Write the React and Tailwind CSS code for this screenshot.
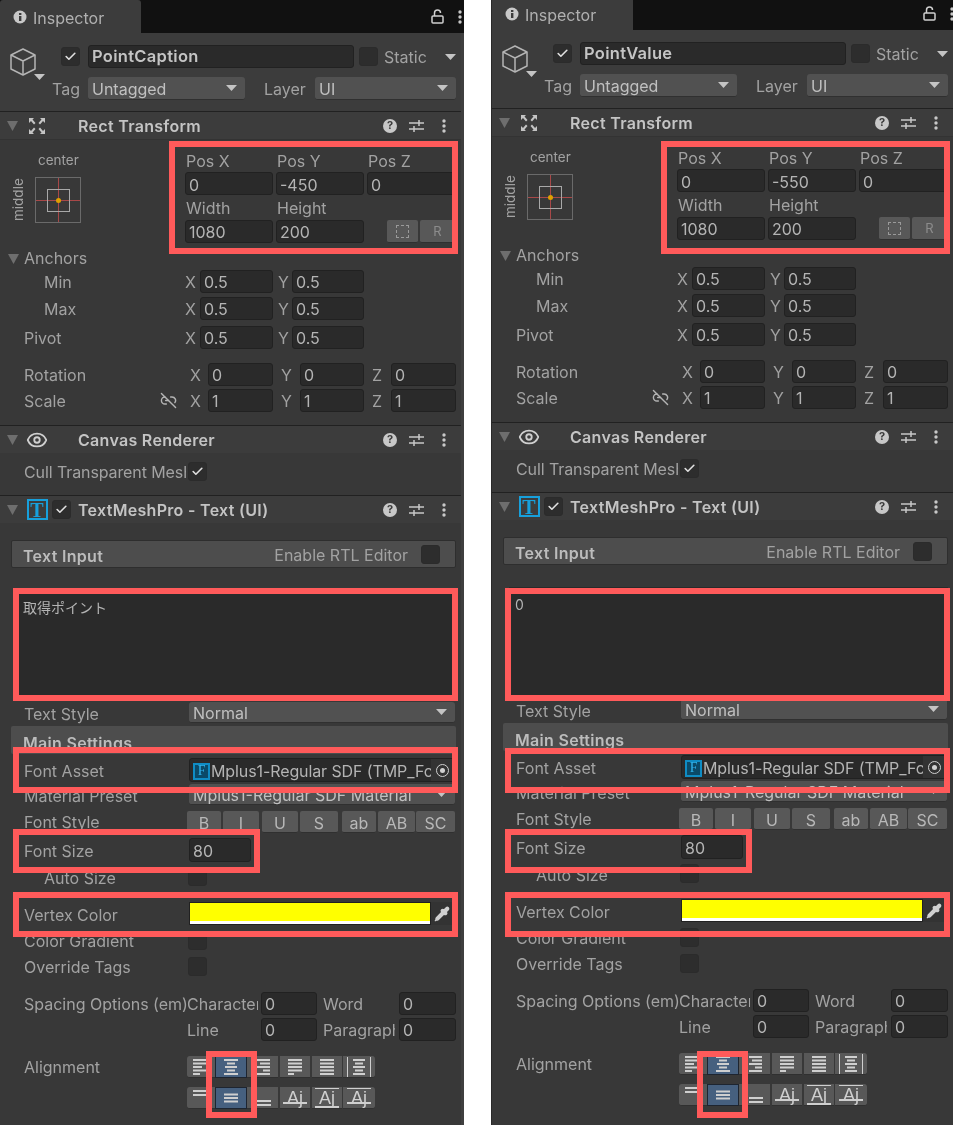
import { Check, Eye, Link2Off, Pipette } from 'lucide-react';

const Caret = ({ className = '' }) => (
  <svg width="11" height="6" viewBox="0 0 11 6" className={className}><path d="M0 0h11L5.5 6z" fill="#c4c4c4" /></svg>
);

const Fold = () => (
  <svg width="11" height="10" viewBox="0 0 11 10" className="shrink-0"><path d="M0 0h11L5.5 10z" fill="#6e6e6e" /></svg>
);

const Cube = () => (
  <svg width="30" height="30" viewBox="0 0 30 30" fill="none" stroke="#b4b4b4" strokeWidth="1.5" strokeLinejoin="round">
    <path d="M15 2 27 8v14l-12 6-12-6V8z" />
    <path d="M3 8l12 6 12-6M15 14v14" />
  </svg>
);

const InfoIcon = () => (
  <svg width="14" height="14" viewBox="0 0 14 14"><circle cx="7" cy="7" r="6.5" fill="#c8c8c8" /><rect x="6" y="6" width="2.4" height="5" fill="#3c3c3c" /><rect x="6" y="3" width="2.4" height="2" fill="#3c3c3c" /></svg>
);

const LockIcon = () => (
  <svg width="13" height="15" viewBox="0 0 13 15" fill="none" stroke="#d0d0d0" strokeWidth="1.5"><rect x="1" y="7" width="11" height="7" rx="1" /><path d="M3.500 7V4a3 3 0 0 1 6 0" /></svg>
);

const Dots = () => (
  <svg width="4" height="14" viewBox="0 0 4 14" fill="#c8c8c8"><circle cx="2" cy="2" r="1.7" /><circle cx="2" cy="7" r="1.7" /><circle cx="2" cy="12" r="1.7" /></svg>
);

const HelpIcon = () => (
  <div className="flex h-[14px] w-[14px] items-center justify-center rounded-full bg-[#c8c8c8] text-[11px] leading-none font-bold text-[#3c3c3c]">?</div>
);

const SlidersIcon = () => (
  <svg width="15" height="14" viewBox="0 0 15 14" fill="none" stroke="#c8c8c8" strokeWidth="1.5"><path d="M0 4h15M0 10h15M10 1v6M5 7v6" /></svg>
);

const RectIcon = () => (
  <svg width="18" height="16" viewBox="0 0 18 16" fill="#c4c4c4">
    <path d="M1 0h5l-1.500 1.600L7.500 5 6 6.500 3 3 1 5zM17 0h-5l1.500 1.600L10.500 5 12 6.500 15 3l2 2zM1 16h5l-1.500-1.600L7.500 11 6 9.500 3 13l-2-2zM17 16h-5l1.500-1.600L10.500 11 12 9.500 15 13l2-2z" />
  </svg>
);

const AnchorBox = () => (
  <div className="relative h-[46px] w-[46px] border border-[#6a6a6a]">
    <div className="absolute top-0 bottom-0 left-[22px] w-px bg-[#a84848]" />
    <div className="absolute top-[22px] right-0 left-0 h-px bg-[#a84848]" />
    <div className="absolute top-[11px] left-[11px] h-[23px] w-[23px] border border-[#a8a8a8]" />
    <div className="absolute top-[20px] left-[20px] h-[5px] w-[5px] rounded-full bg-[#e0a000]" />
  </div>
);

const Tick = ({ on = false, className = '' }) => (
  <div className={`flex h-[19px] w-[19px] shrink-0 items-center justify-center rounded-[3px] border border-[#2b2b2b] bg-[#2d2d2d] ${className}`}>
    {on && <Check size={13} strokeWidth={3} color="#e0e0e0" />}
  </div>
);

// lift drops the 1px text nudge, for the rows where the text sits dead centre
const Field = ({ lift, className = '', children }) => (
  <div className={`flex h-full shrink-0 items-center overflow-hidden rounded-[3px] border border-[#212121] bg-[#2a2a2a] pl-[3px] whitespace-nowrap text-[#b4b4b4] ${lift ? 'pt-0' : 'pt-[2px]'} ${className}`}>
    {children}
  </div>
);

const Dropdown = ({ className = '', children }) => (
  <div className={`flex h-full shrink-0 items-center justify-between rounded-[3px] border-b border-[#303030] bg-[#515151] pr-[8px] pl-[4px] text-[#c0c0c0] ${className}`}>
    <span className="pt-[2px]">{children}</span>
    <Caret />
  </div>
);

const Row = ({ className = '', children }) => (
  <div className={`flex shrink-0 items-center ${className}`}>{children}</div>
);

const Label = ({ lift, className = '', children }) => (
  <div className={`shrink-0 overflow-hidden whitespace-nowrap text-[#a2a2a2] ${lift ? 'pt-0' : 'pt-[2px]'} ${className}`}>{children}</div>
);

const ComponentHeader = ({ icon, enabled, title }) => (
  <div className="flex h-[28px] shrink-0 items-center border-t border-[#212121] bg-[#3c3c3c] pr-[18px] pl-[7px]">
    <Fold />
    <div className="ml-[8px] flex w-[22px] shrink-0 items-center justify-center">{icon}</div>
    <div className="ml-[4px] w-[19px] shrink-0">{enabled && <Tick on />}</div>
    <div className="ml-[7px] text-[16px] font-semibold tracking-[0.3px] whitespace-nowrap text-[#c4c4c4]">{title}</div>
    <div className="ml-auto flex items-center">
      <HelpIcon />
      <div className="ml-[12px]"><SlidersIcon /></div>
      <div className="ml-[18px]"><Dots /></div>
    </div>
  </div>
);

const XYRow = ({ label, indent, top, v = '0.5' }) => (
  <Row className={`h-[23px] ${top} ${indent}`}>
    <Label lift className={indent === 'pl-[44px]' ? 'w-[141px]' : 'w-[161px]'}>{label}</Label>
    <Label lift className="w-[15px]">X</Label>
    <Field lift className="w-[73px]">{v}</Field>
    <Label lift className="w-[19px] pl-[5px]">Y</Label>
    <Field lift className="w-[72px]">{v}</Field>
  </Row>
);

const XYZRow = ({ label, top, v, link }) => (
  <Row className={`h-[23px] pl-[24px] ${top}`}>
    <Label lift className="flex w-[166px] items-center justify-between pr-[13px]">
      <span>{label}</span>
      {link && <Link2Off size={17} color="#b4b4b4" />}
    </Label>
    <Label lift className="w-[18px]">X</Label>
    <Field lift className="w-[65px]">{v}</Field>
    <Label lift className="w-[27px] pl-[8px]">Y</Label>
    <Field lift className="w-[64px]">{v}</Field>
    <Label lift className="w-[27px] pl-[8px]">Z</Label>
    <Field lift className="w-[65px]">{v}</Field>
  </Row>
);

const StyleButton = ({ className = '', children }) => (
  <div className={`flex h-full shrink-0 items-center justify-center rounded-[2px] border-b border-[#303030] bg-[#585858] pt-[2px] ${className}`}>{children}</div>
);

const Lines = ({ rows }) => (
  <svg width="20" height="20" viewBox="0 0 20 20" stroke="#cfcfcf" strokeWidth="2">
    {rows.map(([x1, x2, y]) => <line key={`${x1}-${y}`} x1={x1} x2={x2} y1={y} y2={y} />)}
  </svg>
);

const GlyphAj = ({ over, under, mid }) => (
  <div className="relative flex h-[20px] w-[24px] items-center justify-center font-['Liberation_Sans',sans-serif] text-[18px] leading-none text-[#cfcfcf]">
    Aj
    {over && <div className="absolute top-0 right-0 left-0 h-[1.5px] bg-[#cfcfcf]" />}
    {under && <div className="absolute right-0 bottom-0 left-0 h-[1.5px] bg-[#cfcfcf]" />}
    {mid && <div className="absolute right-0 bottom-[4px] left-0 h-[1.5px] bg-[#cfcfcf]" />}
  </div>
);

const AlignButton = ({ active, className = '', children }) => (
  <div className={`flex h-full shrink-0 items-center justify-center border-b ${active ? 'border border-[#1e2530] bg-[#46607f]' : 'border-[#303030] bg-[#585858]'} ${className}`}>{children}</div>
);

const RedBox = ({ className = '' }) => (
  <div className={`pointer-events-none absolute border-[6px] border-[#ff5a5a] ${className}`} />
);

function Inspector({ name, caption, boxes, className = '' }) {
  return (
    <div className={`relative flex h-[1128px] w-[464px] shrink-0 flex-col overflow-hidden bg-[#383838] font-['Inter',sans-serif] text-[16px] blur-[0.5px] ${className}`}>
      {/* Tab strip */}
      <div className="flex h-[33px] shrink-0 items-center bg-[#111111]">
        <div className="flex h-full w-[141px] items-center rounded-t-[3px] bg-[#3c3c3c] pl-[13px] text-[#b0b0b0]">
          <InfoIcon />
          <span className="ml-[6px] pt-[2px]">Inspector</span>
        </div>
        <div className="ml-auto flex items-center pr-[2px]">
          <LockIcon />
          <div className="ml-[14px]"><Dots /></div>
        </div>
      </div>

      {/* GameObject header */}
      <div className="flex h-[78px] shrink-0 bg-[#3c3c3c] pr-[10px] pl-[8px]">
        <div className="relative mt-[14px] h-[30px] w-[30px]">
          <Cube />
          <Caret className="absolute top-[27px] left-[26px]" />
        </div>
        <div className="ml-[23px] flex-1">
          <Row className="mt-[12px] h-[23px]">
            <Tick on className="mr-[8px]" />
            <Field lift className="w-[266px] pl-[2px] text-[16.5px] font-semibold tracking-[0.3px] text-[#c4c4c4]">{name}</Field>
            <Tick className="ml-[5px]" />
            <Label lift className="ml-[6px]">Static</Label>
            <Caret className="ml-auto" />
          </Row>
          <Row className="mt-[9px] h-[23px]">
            <Label lift className="ml-[-9px] w-[36px]">Tag</Label>
            <Dropdown className="w-[157px]">Untagged</Dropdown>
            <Label lift className="ml-[19px] w-[51px]">Layer</Label>
            <Dropdown className="w-[141px]">UI</Dropdown>
          </Row>
        </div>
      </div>

      {/* Rect Transform */}
      <ComponentHeader icon={<RectIcon />} title="Rect Transform" />
      <div className="flex h-[104px] shrink-0 border-t border-[#333333]">
        <div className="w-[185px] shrink-0 pt-[10px]">
          <div className="h-[27px] pl-[38px] text-[13.5px] text-[#a2a2a2]">center</div>
          <div className="flex">
            <div className="w-[35px] rotate-180 pr-[12px] text-center text-[13.5px] leading-none text-[#a2a2a2] [writing-mode:vertical-rl]">middle</div>
            <AnchorBox />
          </div>
        </div>
        <div className="grid grid-cols-[88px_88px_88px] grid-rows-[23px_23px_25px_23px] gap-x-[3px] pt-[9px]">
          <Label lift className="pl-px">Pos X</Label><Label lift className="pl-px">Pos Y</Label><Label lift className="pl-px">Pos Z</Label>
          <Field>0</Field><Field>{caption.posY}</Field><Field>0</Field>
          <Label lift className="self-center pl-px">Width</Label><Label lift className="self-center pl-px">Height</Label><div />
          <Field lift>1080</Field><Field lift>200</Field>
          <div className="ml-[20px] flex h-full">
            <StyleButton className="w-[31px]">
              <div className="mb-[2px] h-[13px] w-[13px] border border-dashed border-[#9a9a9a]" />
            </StyleButton>
            <StyleButton className="ml-[2px] w-[35px] text-[13px] text-[#8c8c8c]">R</StyleButton>
          </div>
        </div>
      </div>
      <Row className="mt-[4px] h-[23px] pl-[8px]">
        <Fold />
        <Label lift className="ml-[5px] mb-[2px]">Anchors</Label>
      </Row>
      <XYRow label="Min" indent="pl-[44px]" />
      <XYRow label="Max" indent="pl-[44px]" top="mt-[4px]" />
      <XYRow label="Pivot" indent="pl-[24px]" top="mt-[6px]" />
      <XYZRow label="Rotation" top="mt-[14px]" v="0" />
      <XYZRow label="Scale" top="mt-[3px]" v="1" link />
      <div className="h-[13px] shrink-0" />

      {/* Canvas Renderer */}
      <ComponentHeader icon={<Eye size={22} color="#d0d0d0" />} title="Canvas Renderer" />
      <Row className="mt-[9px] h-[19px] pl-[24px]">
        <Label lift className="w-[162px] tracking-[-0.1px]">Cull Transparent Mesh</Label>
        <Tick on className="ml-[2px]" />
      </Row>
      <div className="h-[14px] shrink-0" />

      {/* TextMeshPro */}
      <ComponentHeader
        icon={<div className="flex h-[21px] w-[21px] items-center justify-center border-2 border-[#17a0dc] font-['Liberation_Serif',serif] text-[20px] leading-none font-bold text-[#17a0dc]">T</div>}
        enabled
        title="TextMeshPro - Text (UI)"
      />
      <Row className="mt-[17px] mr-[8px] ml-[11px] h-[28px] rounded-[2px] border border-[#2e2e2e] bg-[#4d4d4d] pr-[15px] pl-[11px]">
        <div className="pt-[3px] text-[16px] font-semibold tracking-[0.3px] text-[#bcbcbc]">Text Input</div>
        <Label className="ml-auto">Enable RTL Editor</Label>
        <Tick className="ml-[13px]" />
      </Row>
      <div className="mt-[22px] mr-[8px] ml-[17px] h-[108px] shrink-0 bg-[#2a2a2a] pt-[7px] pl-[6px] font-['Inter','Noto_Sans_CJK_JP',sans-serif] text-[14px] text-[#b4b4b4]">{caption.text}</div>
      <Row className="mt-[4px] h-[21px] pl-[24px]">
        <Label className="w-[165px]">Text Style</Label>
        <Dropdown className="w-[266px]">Normal</Dropdown>
      </Row>
      <div className="mt-[3px] mr-[8px] ml-[11px] h-[28px] shrink-0 rounded-[2px] bg-[#4d4d4d] pt-[5px] pl-[12px] text-[16px] font-semibold tracking-[0.3px] text-[#bcbcbc]">Main Settings</div>
      <Row className="mt-[4px] h-[24px] pl-[24px]">
        <Label className="w-[165px]">Font Asset</Label>
        <Field className="relative w-[267px] pl-[3px] tracking-[-0.1px]">
          <div className="mr-px flex h-[17px] w-[17px] shrink-0 items-center justify-center border-2 border-[#0f8cc4] bg-[#0b4a68] font-['Liberation_Serif',serif] text-[14px] leading-none text-[#2fb4ee]">F</div>
          Mplus1-Regular SDF (TMP_Font Asset)
          <div className="absolute top-0 right-0 bottom-0 flex w-[24px] items-center justify-center bg-[#333333] pr-[2px]">
            <div className="flex h-[13px] w-[13px] items-center justify-center rounded-full border border-[#d0d0d0]">
              <div className="h-[5px] w-[5px] rounded-full bg-[#d0d0d0]" />
            </div>
          </div>
        </Field>
      </Row>
      <Row className="mt-[2px] h-[21px] pl-[24px]">
        <Label className="w-[165px]">Material Preset</Label>
        <Dropdown className="w-[266px]">Mplus1-Regular SDF Material</Dropdown>
      </Row>
      <Row className="mt-[6px] h-[22px] pl-[24px] text-[#b8b8b8]">
        <Label lift className="w-[163px]">Font Style</Label>
        <StyleButton className="w-[34px]">B</StyleButton>
        <StyleButton className="ml-[2px] w-[36px]">I</StyleButton>
        <StyleButton className="ml-[3px] w-[36px]">U</StyleButton>
        <StyleButton className="ml-[2px] w-[38px]">S</StyleButton>
        <StyleButton className="ml-[4px] w-[34px]">ab</StyleButton>
        <StyleButton className="ml-[2px] w-[37px]">AB</StyleButton>
        <StyleButton className="ml-px w-[39px]">SC</StyleButton>
      </Row>
      <Row className="mt-[5px] h-[24px] pl-[24px]">
        <Label className="w-[165px]">Font Size</Label>
        <Field className="w-[62px]">80</Field>
      </Row>
      <Row className="mt-[5px] h-[19px] pl-[44px]">
        <Label className="w-[144px]">Auto Size</Label>
        <Tick />
      </Row>
      <Row className="mt-[16px] h-[23px] pl-[24px]">
        <Label className="w-[165px]">Vertex Color</Label>
        <div className="flex h-full w-[242px] flex-col border border-[#212121] bg-white">
          <div className="h-[18px] bg-[#ffff00]" />
        </div>
        <div className="flex h-full w-[22px] items-center justify-center bg-[#333333]">
          <Pipette size={16} color="#d0d0d0" fill="#d0d0d0" />
        </div>
      </Row>
      <Row className="mt-[6px] h-[19px] pl-[24px]">
        <Label lift className="w-[164px]">Color Gradient</Label>
        <Tick />
      </Row>
      <Row className="mt-[7px] h-[19px] pl-[24px]">
        <Label lift className="w-[164px]">Override Tags</Label>
        <Tick />
      </Row>
      <Row className="mt-[16px] h-[23px] pl-[24px]">
        <Label lift className="w-[163px]">Spacing Options (em)</Label>
        <Label lift className="mr-[3px] w-[71px]">Character</Label>
        <Field lift className="w-[56px]">0</Field>
        <Label lift className="w-[82px] pl-[6px]">Word</Label>
        <Field lift className="w-[57px]">0</Field>
      </Row>
      <Row className="mt-[3px] h-[23px] pl-[187px]">
        <Label lift className="mr-[3px] w-[71px]">Line</Label>
        <Field lift className="w-[56px]">0</Field>
        <Label lift className="mr-[4px] w-[78px] pl-[6px]">Paragraph</Label>
        <Field lift className="w-[57px]">0</Field>
      </Row>
      <Row className="mt-[15px] h-[22px] pl-[24px]">
        <Label lift className="w-[163px]">Alignment</Label>
        <AlignButton className="w-[28px] rounded-l-[3px]"><Lines rows={[[2, 15, 3], [2, 15, 6.500], [2, 11, 10], [2, 15, 13.500], [2, 9, 17]]} /></AlignButton>
        <AlignButton active className="w-[32px]"><Lines rows={[[3, 17, 3], [6, 14, 6.500], [4, 16, 10], [6, 14, 13.500], [3, 17, 17]]} /></AlignButton>
        <AlignButton className="w-[31px]"><Lines rows={[[4, 17, 3], [7, 17, 6.500], [4, 17, 10], [10, 17, 13.500], [4, 17, 17]]} /></AlignButton>
        <AlignButton className="ml-[2px] w-[30px]"><Lines rows={[[3, 17, 3], [3, 17, 6.500], [3, 17, 10], [3, 17, 13.500], [3, 9, 17]]} /></AlignButton>
        <AlignButton className="ml-[2px] w-[30px]"><Lines rows={[[3, 17, 3], [3, 17, 6.500], [3, 17, 10], [3, 17, 13.500], [3, 17, 17]]} /></AlignButton>
        <AlignButton className="ml-px w-[32px] rounded-r-[3px]">
          <div className="border-x-[1.5px] border-[#cfcfcf] px-[1px]"><Lines rows={[[4, 16, 3], [6, 14, 6.500], [4, 16, 10], [6, 14, 13.500], [4, 16, 17]]} /></div>
        </AlignButton>
      </Row>
      <Row className="mt-[9px] h-[22px] pl-[187px]">
        <AlignButton className="w-[28px] rounded-l-[3px]"><Lines rows={[[2, 15, 3], [2, 15, 7]]} /></AlignButton>
        <AlignButton active className="w-[32px]"><Lines rows={[[3, 17, 6.500], [3, 17, 10], [3, 17, 13.500]]} /></AlignButton>
        <AlignButton className="w-[31px]"><Lines rows={[[4, 18, 13], [4, 18, 17]]} /></AlignButton>
        <AlignButton className="ml-[2px] w-[30px]"><GlyphAj mid /></AlignButton>
        <AlignButton className="ml-[2px] w-[30px]"><GlyphAj over under /></AlignButton>
        <AlignButton className="ml-px w-[32px] rounded-r-[3px]"><GlyphAj over mid /></AlignButton>
      </Row>

      {/* Scrollbar gutter */}
      <div className="absolute top-[33px] right-0 bottom-0 w-[3px] bg-[#3f3f3f]" />

      {boxes.map(b => <RedBox key={b} className={b} />)}
    </div>
  );
}

const LEFT_BOXES = [
  'top-[141px] left-[169px] h-[113px] w-[289px]',
  'top-[588px] left-[13px] h-[113px] w-[445px]',
  'top-[747px] left-[13px] h-[46px] w-[445px]',
  'top-[829px] left-[13px] h-[44px] w-[247px]',
  'top-[892px] left-[13px] h-[45px] w-[445px]',
  'top-[1051px] left-[206px] h-[67px] w-[51px]',
];

const RIGHT_BOXES = [
  'top-[144px] left-[169px] h-[113px] w-[289px]',
  'top-[591px] left-[13px] h-[113px] w-[445px]',
  'top-[751px] left-[13px] h-[45px] w-[445px]',
  'top-[832px] left-[13px] h-[44px] w-[247px]',
  'top-[895px] left-[13px] h-[45px] w-[445px]',
  'top-[1054px] left-[205px] h-[67px] w-[51px]',
];

export default function App() {
  return (
    <div className="flex h-[1125px] w-[953px] overflow-hidden bg-white">
      <Inspector name="PointCaption" caption={{ posY: '-450', text: '取得ポイント' }} boxes={LEFT_BOXES} />
      <div className="w-[27px] shrink-0" />
      <div className="w-px shrink-0 bg-[#2a2a2a]" />
      <Inspector name="PointValue" caption={{ posY: '-550', text: '0' }} boxes={RIGHT_BOXES} className="-mt-[3px]" />
    </div>
  );
}
